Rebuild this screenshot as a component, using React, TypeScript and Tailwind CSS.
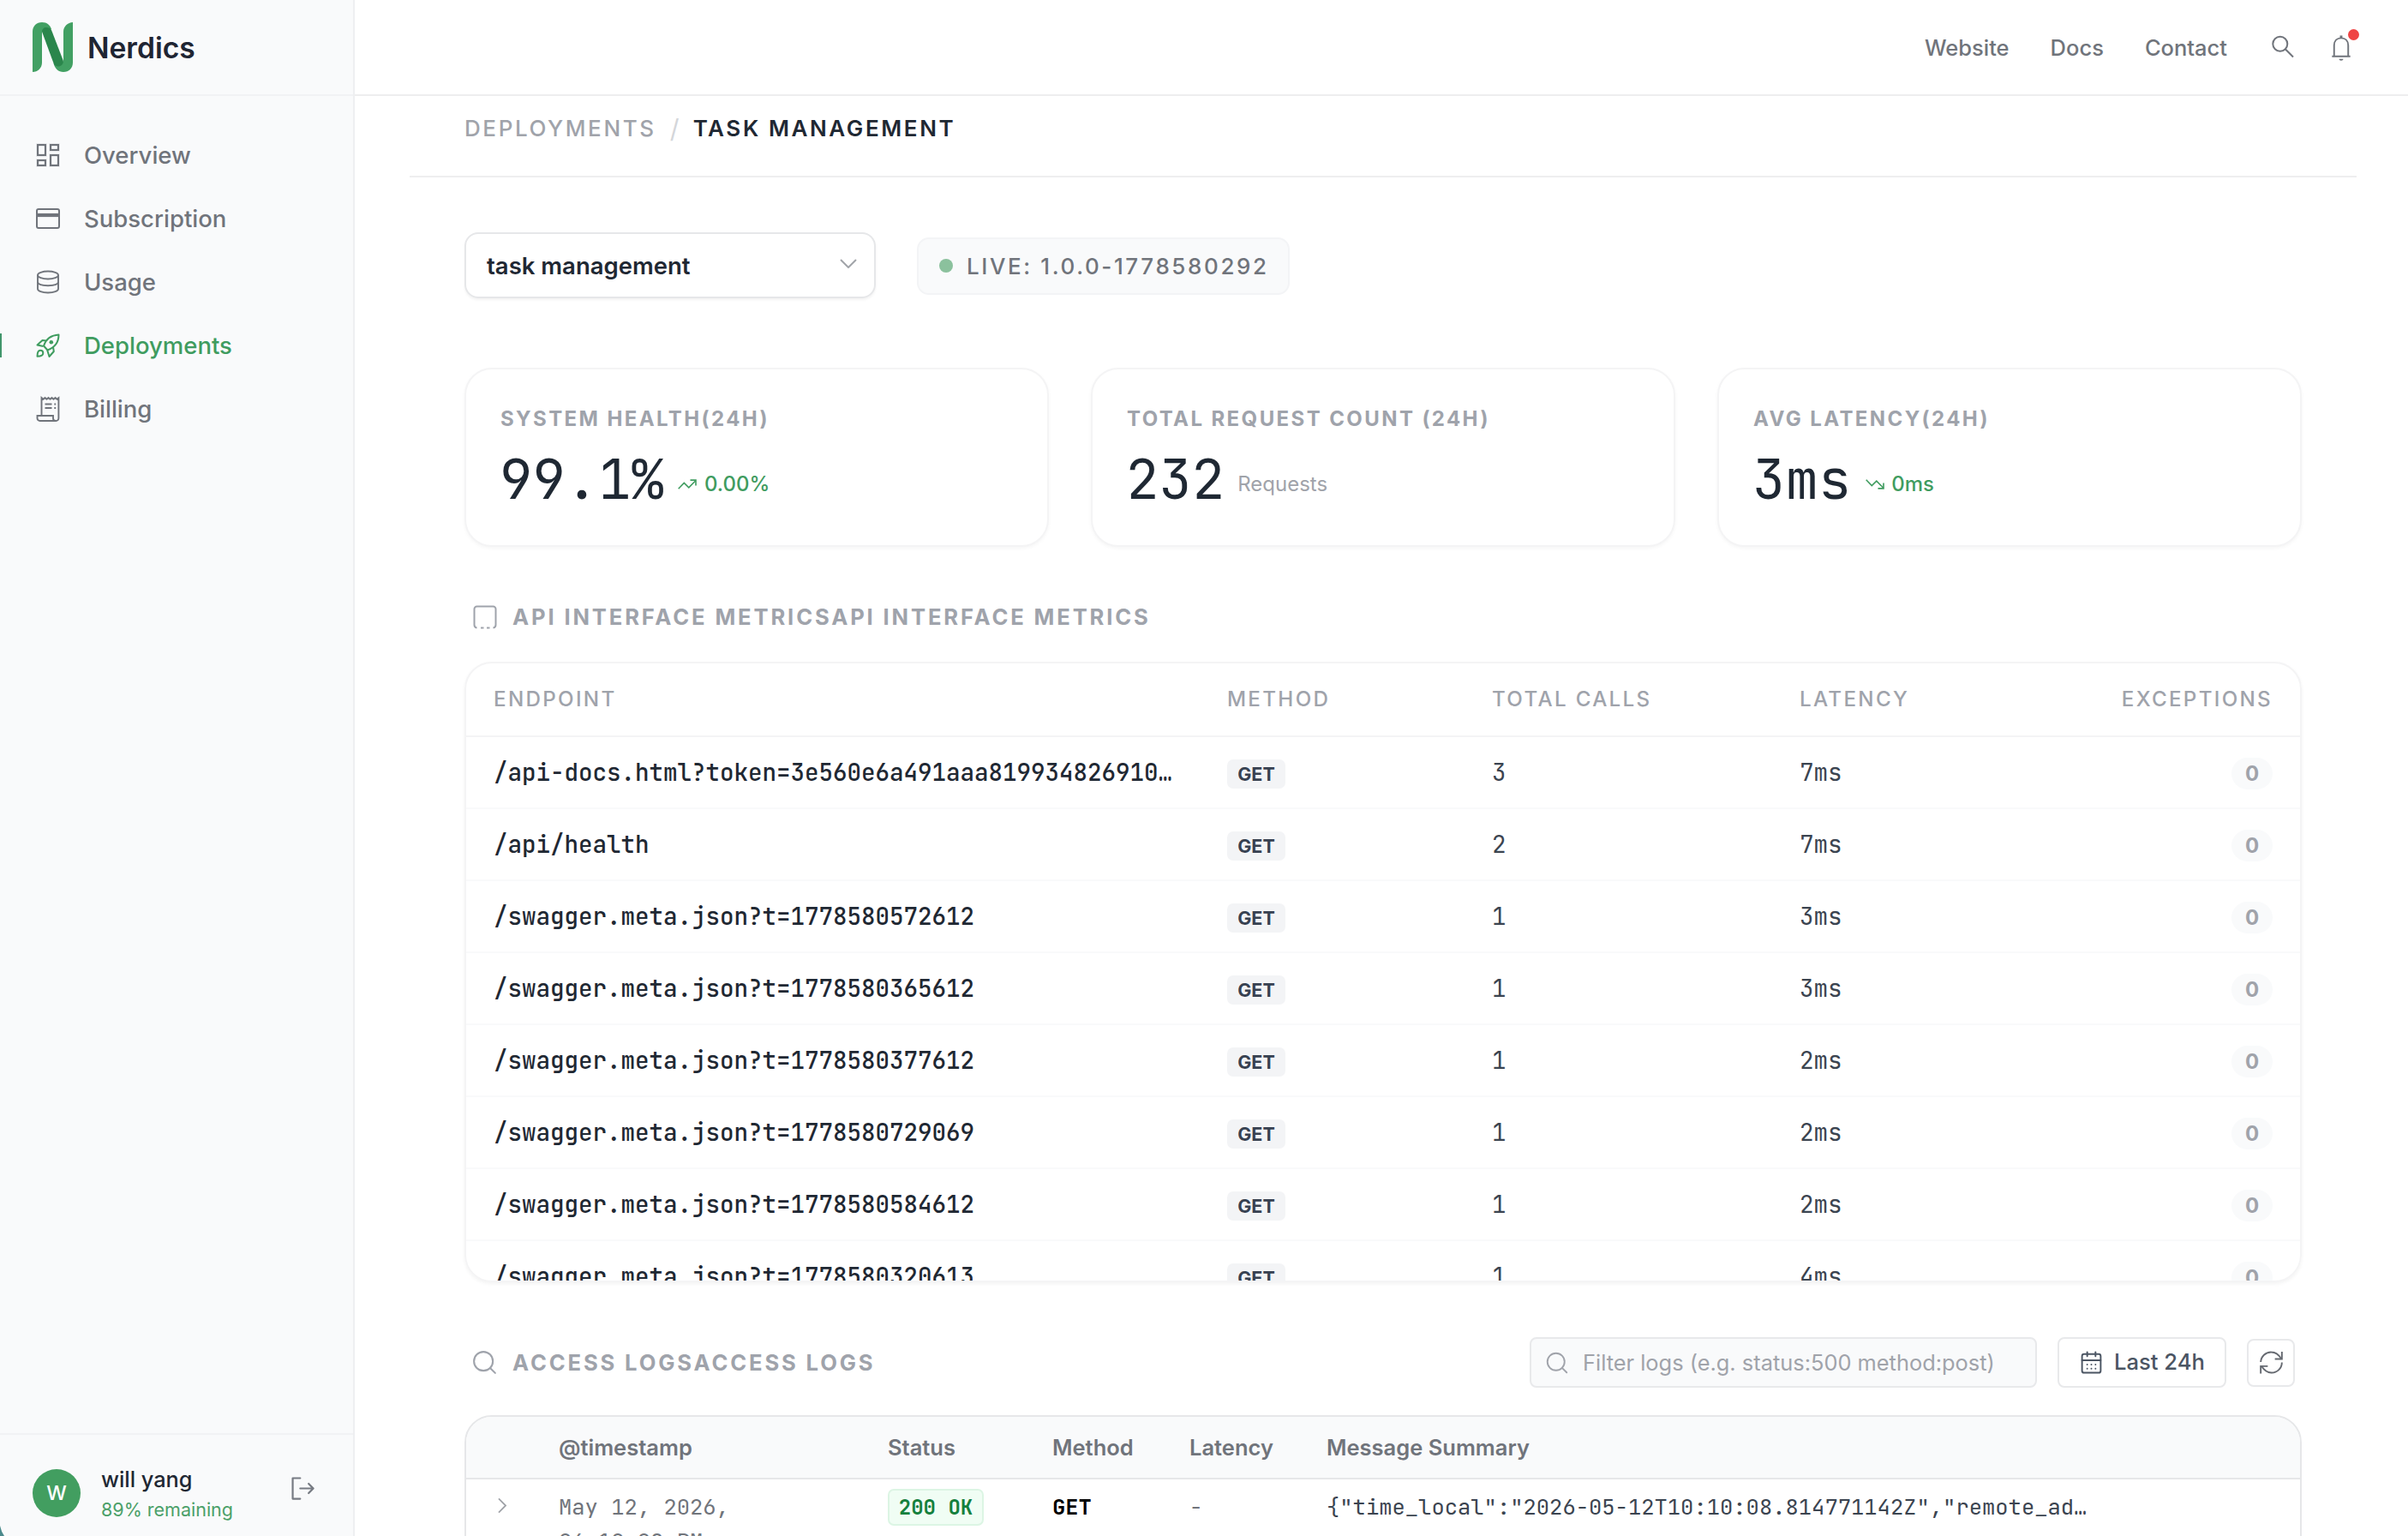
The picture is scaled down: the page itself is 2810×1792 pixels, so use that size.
import React from "react";
import { MdOutlineDashboard } from "react-icons/md";
import { PiSignOut } from "react-icons/pi";
import { CalendarDays, Search } from "lucide-react";

type IconProps = { className?: string };

const Logo = () => (
  <svg viewBox="0 0 47 58" className="h-[58px] w-[47px]">
    <path d="M0 58V11C0 4.500 4.500 0 11 0c6 0 9.500 3.500 11 8L11 11v36c0 6.500-5 11-11 11z" fill="#42a063" />
    <path d="M47 0c-6 0-11 5-11 11v35l-11.400 2C26 54 30 58 36 58c6.500 0 11-4.500 11-11z" fill="#42a063" />
    <path d="M11 11c0-3 2-5 5-5 2.800 0 5 1 6 3l13.900 36c.3 4-2.900 6.500-5.900 6.500-2.500 0-4.500-1.500-5.400-3.500z" fill="#2b864c" />
  </svg>
);

const CardIcon = ({ className }: IconProps) => (
  <svg viewBox="0 0 30 26" className={className} fill="none" stroke="currentColor">
    <rect x="2" y="2" width="26" height="22" rx="2" strokeWidth="2" />
    <path d="M2 9h26" strokeWidth="4.200" />
  </svg>
);

const DatabaseIcon = ({ className }: IconProps) => (
  <svg viewBox="0 0 28 28" className={className} fill="none" stroke="currentColor" strokeWidth="1.900">
    <ellipse cx="14" cy="6" rx="12" ry="4.500" />
    <path d="M2 6v16c0 2.500 5 4.500 12 4.500s12-2 12-4.500V6" />
    <path d="M2 14c0 2.500 5 4.200 12 4.200s12-1.700 12-4.200" />
  </svg>
);

const RocketIcon = ({ className }: IconProps) => (
  <svg viewBox="0 0 30 30" className={className} fill="none" stroke="currentColor" strokeWidth="2" strokeLinejoin="round">
    <path d="M10 15.500C12.500 8 18 3 27.500 2.500 27.500 11 22.500 17.500 14.500 20.500z" />
    <path d="M13 9.500 8.500 9 2.500 14.500 9.500 16" />
    <path d="M21 17l.8 5L16.500 28 14.200 20.500" />
    <path d="M2.500 27.800c0-3.800.5-7 3.500-7 2 0 3.300 1.300 3.300 3.200 0 3-3 3.800-6.800 3.800z" />
    <circle cx="18.800" cy="11.300" r="2.300" fill="currentColor" stroke="none" />
  </svg>
);

const ReceiptIcon = ({ className }: IconProps) => (
  <svg viewBox="0 0 28 30" className={className} fill="none" stroke="currentColor" strokeWidth="1.900">
    <path d="M6.500 23V2l2 1.700 2-1.700 2 1.700 2-1.700 2 1.700 2-1.700 2 1.700 2-1.700 2 1.700 1.900-1.500V26a3 3 0 0 1-3 3H4.500a3 3 0 0 1-3-3v-3h18.500v3a3 3 0 0 0 3 3" />
    <path d="M10.500 9.500h8M10.500 14h8M21.300 9.500h1.900M21.300 14h1.900" />
  </svg>
);

const SearchIcon = ({ className }: IconProps) => (
  <svg viewBox="0 0 28 28" className={className} fill="none" stroke="currentColor" strokeWidth="2">
    <circle cx="10.800" cy="10.300" r="8.500" />
    <path d="M16.800 16.300 26 25.500" />
  </svg>
);

const BellIcon = ({ className }: IconProps) => (
  <svg viewBox="0 0 24 32" className={className} fill="none" stroke="currentColor" strokeWidth="2">
    <path d="M1 26.500h22M3.500 26.500V13.500C3.500 8 7 4.500 12 4.500s8.500 3.500 8.500 9v13" />
    <path d="M12 4.500V1.500" strokeWidth="3" />
    <path d="M9.300 29.700h5.400c-.3 1.400-1.400 2-2.700 2s-2.400-.6-2.700-2z" fill="currentColor" stroke="none" />
  </svg>
);

const TrendIcon = ({ className }: IconProps) => (
  <svg viewBox="0 0 22 12" className={className} fill="none" stroke="currentColor" strokeWidth="1.600">
    <path d="M.7 11.200 7.300 4.500l5.500 5.300 8-8" />
    <path d="M14.500 1.100H21v6.300" />
  </svg>
);

const WindowIcon = ({ className }: IconProps) => (
  <svg viewBox="0 0 28 28" className={className} fill="none" stroke="currentColor" strokeWidth="2">
    <path d="M4.500 26.500C2.500 26.200 1.500 25 1.500 23V4.500a3 3 0 0 1 3-3h19a3 3 0 0 1 3 3V23c0 2-1 3.200-3 3.500" />
    <path d="M9 26.500h3.500M16 26.500h3.500" strokeWidth="2.200" />
  </svg>
);

const RefreshIcon = ({ className }: IconProps) => (
  <svg viewBox="0 0 28 28" className={className} fill="none" stroke="currentColor" strokeWidth="2">
    <path d="M1.200 13.500a12.500 12.500 0 0 1 12.800-12c5 0 8.700 2.600 12 8" />
    <path d="M26.800 1v8.800h-8.500" />
    <path d="M26.800 14a12.500 12.500 0 0 1-12.800 12.500c-5 0-8.700-3-12-8" />
    <path d="M1.200 27.500v-9h8.500" />
  </svg>
);

const Chevron = ({ className }: IconProps) => (
  <svg viewBox="0 0 20 11" className={className} fill="none" stroke="currentColor" strokeWidth="2">
    <path d="M1 1l9 9 9-9" />
  </svg>
);

const nav = [
  { label: "Overview", icon: <MdOutlineDashboard className="size-[36px] [&_path]:stroke-[#f9fafb] [&_path]:stroke-[0.5px]" /> },
  { label: "Subscription", icon: <CardIcon className="h-[26px] w-[30px]" /> },
  { label: "Usage", icon: <DatabaseIcon className="size-[28px]" /> },
  { label: "Deployments", icon: <RocketIcon className="size-[30px]" />, active: true },
  { label: "Billing", icon: <ReceiptIcon className="h-[30px] w-[28px]" /> },
];

const endpoints = [
  ["/api-docs.html?token=3e560e6a491aaa819934826910…", "3", "7ms"],
  ["/api/health", "2", "7ms"],
  ["/swagger.meta.json?t=1778580572612", "1", "3ms"],
  ["/swagger.meta.json?t=1778580365612", "1", "3ms"],
  ["/swagger.meta.json?t=1778580377612", "1", "2ms"],
  ["/swagger.meta.json?t=1778580729069", "1", "2ms"],
  ["/swagger.meta.json?t=1778580584612", "1", "2ms"],
  ["/swagger.meta.json?t=1778580320613", "1", "4ms"],
];

function Stat({ label, value, children }: { label: string; value: string; children: React.ReactNode }) {
  return (
    <div className="h-[209px] rounded-[32px] border-2 border-[#f4f4f5] bg-white pl-[40px] pt-[40px] shadow-[0_2px_4px_rgba(0,0,0,0.04)]">
      <div className="h-9 text-[24px] font-bold leading-9 tracking-[2.4px] text-[#9fa3ab]">{label}</div>
      <div className="mt-[10px] flex h-[84px] items-center">
        <span className="-ml-px font-['JetBrains_Mono','DejaVu_Sans_Mono',monospace] text-[64px] leading-[84px] text-[#1f2833]">{value}</span>
        {children}
      </div>
    </div>
  );
}

export default function App() {
  return (
    <div className="relative flex h-[1792px] w-[2810px] overflow-hidden bg-white font-['Inter',sans-serif]">
      <aside className="flex w-[414px] shrink-0 flex-col border-r-2 border-[#eeeff1] bg-[#f9fafb]">
        <div className="flex h-[112px] items-center border-b-2 border-[#f1f2f4] pl-[38px]">
          <Logo />
          <span className="ml-[17px] pt-[2px] text-[33.6px] font-semibold text-[#1f2533]">Nerdics</span>
        </div>
        <nav className="mt-8 flex-1">
          {nav.map((n) => (
            <div
              key={n.label}
              className={
                n.active
                  ? "relative flex h-[74px] items-center pl-[38px] text-[#3f9c5f]"
                  : "relative flex h-[74px] items-center pl-[38px] text-[#70747b]"
              }
            >
              {n.active && <span className="absolute left-0 top-[23px] h-7 w-[2px] bg-[#41956b]" />}
              <span className="flex w-9 justify-center">{n.icon}</span>
              <span className="ml-[24px] pt-[2px] text-[27.5px] font-medium">{n.label}</span>
            </div>
          ))}
        </nav>
        <div className="flex h-[120px] items-center border-t-2 border-[#f1f2f4] pl-[38px] pt-[18px]">
          <span className="flex size-14 items-center justify-center rounded-full bg-[#429e60] text-[23.5px] font-medium text-white">W</span>
          <div className="ml-[24px] flex w-[217px] flex-col pt-[2px]">
            <span className="text-[25.3px] font-medium leading-[36px] text-[#1f2833]">will yang</span>
            <span className="text-[21.5px] leading-[34px] text-[#4ba069]">89% remaining</span>
          </div>
          <PiSignOut className="-mt-[12px] size-[35px] text-[#777b83]" />
        </div>
      </aside>

      <div className="flex min-w-0 flex-1 flex-col">
        <header className="flex h-[112px] shrink-0 items-center justify-end border-b-2 border-[#eeeeef] pr-16 text-[25.5px] font-medium text-[#70747b]">
          <div className="flex gap-[48px] pt-[2px]">
            <span>Website</span>
            <span>Docs</span>
            <span>Contact</span>
          </div>
          <SearchIcon className="ml-[51px] size-7" />
          <div className="relative ml-[42px] mr-[2px]">
            <BellIcon className="h-[31px] w-[24px]" />
            <span className="absolute -top-[6px] left-[20px] size-[13px] rounded-full bg-[#ef4444]" />
          </div>
        </header>

        <main className="ml-16 mr-[60px]">
          <div className="flex h-[95px] gap-[18px] border-b-2 border-[#eeeeef] pl-[64px] pt-[20px] text-[26px] leading-9 tracking-[2.6px]">
            <span className="font-medium text-[#a0a3aa]">DEPLOYMENTS</span>
            <span className="-ml-[2px] w-[12px] text-center text-[30px] text-[#d4d6da]">/</span>
            <span className="-ml-[3px] font-semibold text-[#1f2833]">TASK MANAGEMENT</span>
          </div>

          <div className="ml-16 w-[2144px]">
            <div className="mt-16 flex h-[77px] items-center">
              <div className="flex h-[77px] w-[480px] items-center justify-between rounded-[16px] border-2 border-[#e6e7e9] pl-[24px] pr-5 shadow-[0_2px_3px_rgba(0,0,0,0.05)]">
                <span className="pt-[2px] text-[27.5px] font-semibold text-[#1f2833]">task management</span>
                <Chevron className="-mt-[5px] h-[11px] w-5 text-[#a1a4a9]" />
              </div>
              <div className="ml-12 mt-px flex h-[67px] w-[435px] items-center rounded-[14px] border-2 border-[#f3f4f6] bg-[#f9fafb] pl-[24px]">
                <span className="size-4 rounded-full bg-[#8bc19d]" />
                <span className="ml-[16px] text-[26px] font-medium tracking-[2.6px] text-[#70747b]">LIVE: 1.0.0-1778580292</span>
              </div>
            </div>

            <div className="mt-[81px] grid grid-cols-3 gap-[49px]">
              <Stat label="SYSTEM HEALTH(24H)" value="99.1%">
                <span className="ml-4 flex items-center gap-[9px] pt-[11px] text-[24px] font-medium text-[#3f9c5f]">
                  <TrendIcon className="h-[12px] w-[22px]" />
                  0.00%
                </span>
              </Stat>
              <Stat label="TOTAL REQUEST COUNT (24H)" value="232">
                <span className="ml-[15px] pt-[12px] text-[24px] text-[#a0a3aa]">Requests</span>
              </Stat>
              <Stat label="AVG LATENCY(24H)" value="3ms">
                <span className="ml-[17px] flex items-center gap-[8px] pt-[11px] text-[24px] font-medium text-[#3f9c5f]">
                  <TrendIcon className="h-[12px] w-[22px] -scale-y-100" />
                  0ms
                </span>
              </Stat>
            </div>

            <div className="mt-[64px] flex h-9 items-center pl-[10px] text-[#9fa3ab]">
              <WindowIcon className="size-7" />
              <span className="ml-[18px] pt-px text-[25.6px] font-bold tracking-[2.86px]">API INTERFACE METRICSAPI INTERFACE METRICS</span>
            </div>

            <div className="mt-[34px] h-[724px] overflow-hidden rounded-[32px] border-2 border-[#f4f4f5] shadow-[0_2px_4px_rgba(0,0,0,0.05)]">
              <div className="grid h-[86px] grid-cols-[856px_309px_359px_1fr] items-center border-b-2 border-[#f4f4f5] px-[32px] text-[24.2px] font-medium tracking-[2.3px] text-[#9fa3ab]">
                <span>ENDPOINT</span>
                <span>METHOD</span>
                <span>TOTAL CALLS</span>
                <div className="flex justify-between">
                  <span>LATENCY</span>
                  <span>EXCEPTIONS</span>
                </div>
              </div>
              {endpoints.map(([path, calls, latency]) => (
                <div
                  key={path}
                  className="grid h-[84px] grid-cols-[856px_309px_359px_1fr] items-center border-b-2 border-[#f9fafb] px-[32px] pt-px font-['JetBrains_Mono','DejaVu_Sans_Mono',monospace] text-[27.5px] text-[#3b4450]"
                >
                  <span className="font-medium text-[#1f2833]">{path}</span>
                  <span className="mt-[3px] flex h-[34px] w-[68px] items-center justify-center rounded-[7px] bg-[#f3f4f6] font-['Inter',sans-serif] text-[21.5px] font-bold text-[#374151]">GET</span>
                  <span>{calls}</span>
                  <div className="flex items-center justify-between">
                    <span>{latency}</span>
                    <span className="mt-[2px] flex h-[37px] w-[48px] items-center justify-center rounded-full bg-[#f9fafb] font-['Inter',sans-serif] text-[24px] font-bold text-[#a0a3aa]">0</span>
                  </div>
                </div>
              ))}
            </div>

            <div className="mt-16 flex h-[59px] items-center pl-[7px] pr-2">
              <Search className="size-[33px] text-[#9fa3ab]" strokeWidth={1.5} />
              <span className="ml-[16px] flex-1 pt-px text-[25.6px] font-bold tracking-[2.86px] text-[#9fa3ab]">ACCESS LOGSACCESS LOGS</span>
              <div className="flex h-[59px] w-[592px] items-center rounded-[8px] border-2 border-[#e8e9eb] bg-[#f9fafb] pl-[15px] text-[#a0a3aa]">
                <Search className="size-[30px]" strokeWidth={1.5} />
                <span className="ml-[15px] pt-px text-[25.4px]">Filter logs (e.g. status:500 method:post)</span>
              </div>
              <div className="ml-6 flex h-[59px] w-[197px] items-center rounded-[8px] border-2 border-[#e8e9eb] pl-[23px] text-[#4b5563]">
                <CalendarDays className="size-[29px]" strokeWidth={1.6} />
                <span className="ml-[12px] text-[25.6px] font-medium">Last 24h</span>
              </div>
              <div className="ml-6 flex size-14 items-center justify-center rounded-[8px] border-2 border-[#e8e9eb] text-[#666a71]">
                <RefreshIcon className="size-[27px]" />
              </div>
            </div>

            <div className="mt-8 h-[300px] overflow-hidden rounded-[32px] border-2 border-[#e6e7e9]">
              <div className="grid h-[73px] grid-cols-[108px_384px_192px_160px_160px_1fr] items-center border-b-2 border-[#e6e7e9] bg-[#f9fafb] pt-px text-[25.5px] font-semibold text-[#70747b]">
                <span />
                <span>@timestamp</span>
                <span>Status</span>
                <span>Method</span>
                <span>Latency</span>
                <span>Message Summary</span>
              </div>
              <div className="grid grid-cols-[108px_384px_192px_160px_160px_1fr] items-start pt-[12px] font-['JetBrains_Mono','DejaVu_Sans_Mono',monospace] text-[25.5px] leading-[40px] text-[#70747b]">
                <span className="flex h-[36px] items-center pl-[33px]">
                  <Chevron className="h-[11px] w-[18px] -rotate-90 text-[#a1a4a9]" />
                </span>
                <span>
                  May 12, 2026,
                  <br />
                  06:10:08 PM
                </span>
                <span className="-mt-px flex h-[43px] w-[112px] items-center justify-center rounded-[7px] border-2 border-[#dcf5e4] bg-[#f0fdf4] text-[24px] font-bold text-[#15803d]">200 OK</span>
                <span className="font-bold text-black">GET</span>
                <span>-</span>
                <span className="text-[#3b4450]">{'{"time_local":"2026-05-12T10:10:08.814771142Z","remote_ad…'}</span>
              </div>
            </div>
          </div>
        </main>
      </div>

      <svg viewBox="0 0 5 12" className="absolute bottom-0 left-0 h-3 w-[5px]">
        <path d="M0 0 Q1.500 7 5 12H0z" fill="#4b8a8c" />
      </svg>
    </div>
  );
}
